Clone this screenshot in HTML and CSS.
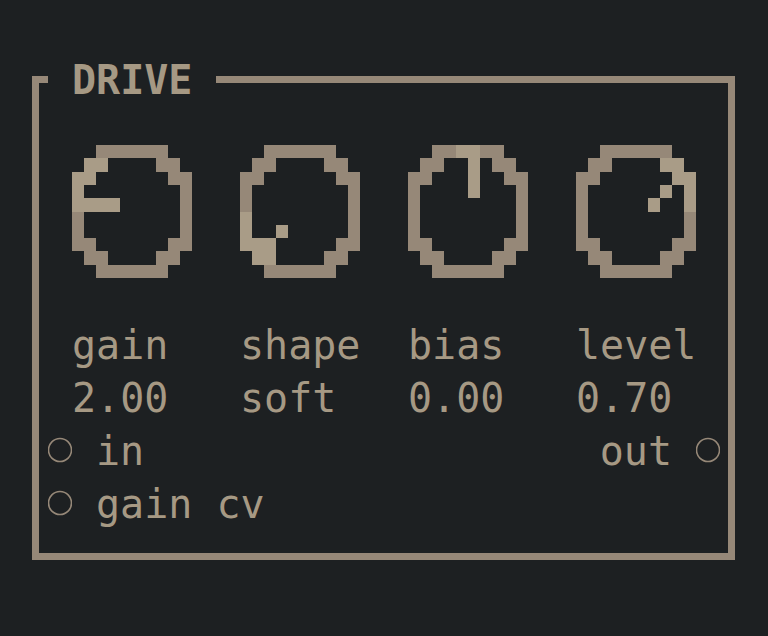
FILE: index.html
```html
<!DOCTYPE html>
<html lang="en">

<head>
    <meta charset="UTF-8">
    <meta name="viewport" content="width=device-width, initial-scale=1.0">
    <title>drive</title>
    <link rel="stylesheet" href="styles.css">
</head>

<body>
    <svg class="defs" width="0" height="0">
        <symbol id="ring" viewBox="0 0 10 10">
            <rect x="2" y="0" width="6" height="1" />
            <rect x="1" y="1" width="2" height="1" />
            <rect x="7" y="1" width="2" height="1" />
            <rect x="0" y="2" width="2" height="1" />
            <rect x="8" y="2" width="2" height="1" />
            <rect x="0" y="3" width="1" height="4" />
            <rect x="9" y="3" width="1" height="4" />
            <rect x="0" y="7" width="2" height="1" />
            <rect x="8" y="7" width="2" height="1" />
            <rect x="1" y="8" width="2" height="1" />
            <rect x="7" y="8" width="2" height="1" />
            <rect x="2" y="9" width="6" height="1" />
        </symbol>
    </svg>

    <fieldset class="module">
        <legend class="module-title">DRIVE</legend>

        <div class="knobs">
            <div class="knob-col">
                <svg class="knob" viewBox="0 0 10 10" preserveAspectRatio="none">
                    <use href="#ring" class="ring" />
                    <g class="hl">
                        <rect x="1" y="1" width="2" height="1" />
                        <rect x="0" y="2" width="2" height="1" />
                        <rect x="0" y="3" width="1" height="1" />
                        <rect x="0" y="4" width="4" height="1" />
                    </g>
                </svg>
                <div class="label">gain</div>
                <div class="value">2.00</div>
            </div>
            <div class="knob-col">
                <svg class="knob" viewBox="0 0 10 10" preserveAspectRatio="none">
                    <use href="#ring" class="ring" />
                    <g class="hl">
                        <rect x="0" y="5" width="1" height="2" />
                        <rect x="0" y="7" width="3" height="1" />
                        <rect x="1" y="8" width="2" height="1" />
                        <rect x="3" y="6" width="1" height="1" />
                    </g>
                </svg>
                <div class="label">shape</div>
                <div class="value">soft</div>
            </div>
            <div class="knob-col">
                <svg class="knob" viewBox="0 0 10 10" preserveAspectRatio="none">
                    <use href="#ring" class="ring" />
                    <g class="hl">
                        <rect x="4" y="0" width="2" height="1" />
                        <rect x="5" y="1" width="1" height="3" />
                    </g>
                </svg>
                <div class="label">bias</div>
                <div class="value">0.00</div>
            </div>
            <div class="knob-col">
                <svg class="knob" viewBox="0 0 10 10" preserveAspectRatio="none">
                    <use href="#ring" class="ring" />
                    <g class="hl">
                        <rect x="7" y="1" width="2" height="1" />
                        <rect x="8" y="2" width="2" height="1" />
                        <rect x="9" y="3" width="1" height="2" />
                        <rect x="7" y="3" width="1" height="1" />
                        <rect x="6" y="4" width="1" height="1" />
                    </g>
                </svg>
                <div class="label">level</div>
                <div class="value">0.70</div>
            </div>
        </div>

        <div class="ports">
            <div class="port-row">
                <div class="port">
                    <svg class="jack" viewBox="0 0 24 53"><circle cx="12" cy="26" r="11.5" /></svg>
                    <span class="port-name">in</span>
                </div>
                <div class="port">
                    <span class="port-name">out</span>
                    <svg class="jack" viewBox="0 0 24 53"><circle cx="12" cy="26" r="11.5" /></svg>
                </div>
            </div>
            <div class="port-row">
                <div class="port">
                    <svg class="jack" viewBox="0 0 24 53"><circle cx="12" cy="26" r="11.5" /></svg>
                    <span class="port-name">gain cv</span>
                </div>
            </div>
        </div>
    </fieldset>
</body>

</html>
```

FILE: styles.css
```css
body,
html {
    padding: 0;
    margin: 0;
    width: 100%;
    height: 100%;
    background: #1d2022;
}

body {
    color: #a69984;
    font-family: "DejaVu Sans Mono", "Liberation Mono", monospace;
    font-size: 40px;
    line-height: 53px;
    padding-top: 53px;
    box-sizing: border-box;
}

.defs {
    position: absolute;
}

.module {
    box-sizing: border-box;
    width: 703px;
    margin: 0 0 0 32px;
    padding: 0 8px 23px 9px;
    border: 7px solid #968878;
    min-inline-size: 0;
}

.module-title {
    box-sizing: border-box;
    padding: 2px 24px 0;
    font-weight: bold;
    height: 53px;
    line-height: 51px;
}

.knobs {
    display: grid;
    grid-template-columns: repeat(4, 168px);
    padding-left: 24px;
}

.knob-col {
    display: flex;
    flex-direction: column;
}

.knob {
    display: block;
    width: 120px;
    height: 133px;
    margin-top: 39px;
    margin-bottom: 40px;
    shape-rendering: crispEdges;
}

.knob .ring {
    fill: #968878;
}

.knob .hl {
    fill: #a99c87;
}

.label,
.value,
.port-name {
    box-sizing: border-box;
    height: 53px;
    padding-top: 2px;
    line-height: 51px;
    white-space: pre;
}

.port-row {
    display: flex;
    justify-content: space-between;
    height: 53px;
}

.port {
    display: flex;
    gap: 24px;
}

.jack {
    display: block;
    width: 24px;
    height: 53px;
    fill: none;
    stroke: #968878;
    stroke-width: 1.6;
}
```
